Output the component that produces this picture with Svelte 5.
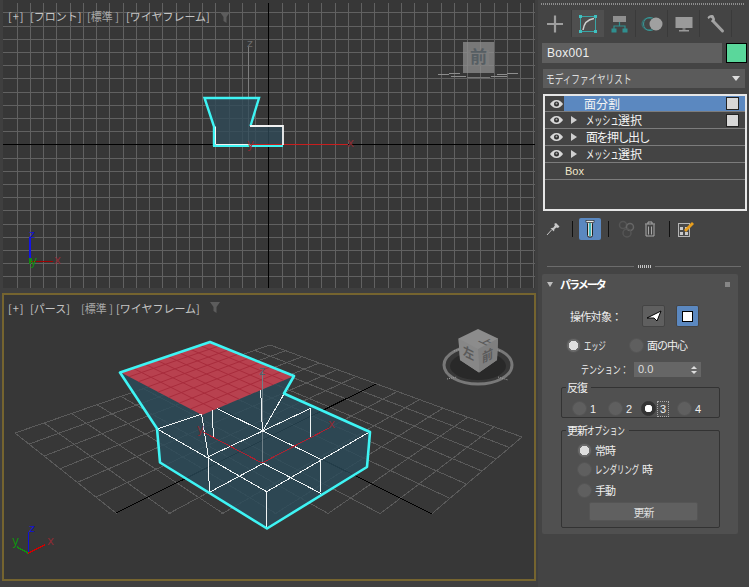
<script>
  const vx = [];
  for (let n = -19; n <= 20; n++) vx.push(Math.round(268.25 + n * 13.25));
  const hy = [];
  for (let n = -10; n <= 11; n++) hy.push(Math.round(144.3 + n * 13.2));

  function homog(p0, p1, p2, p3) {
    const dx1 = p1[0] - p2[0], dx2 = p3[0] - p2[0], sx = p0[0] - p1[0] + p2[0] - p3[0];
    const dy1 = p1[1] - p2[1], dy2 = p3[1] - p2[1], sy = p0[1] - p1[1] + p2[1] - p3[1];
    const den = dx1 * dy2 - dx2 * dy1;
    const g = (sx * dy2 - dx2 * sy) / den, h = (dx1 * sy - sx * dy1) / den;
    const a = p1[0] - p0[0] + g * p1[0], b = p3[0] - p0[0] + h * p3[0], c = p0[0];
    const d = p1[1] - p0[1] + g * p1[1], e = p3[1] - p0[1] + h * p3[1], f = p0[1];
    return (u, v) => {
      const w = g * u + h * v + 1;
      return [(a * u + b * v + c) / w, (d * u + e * v + f) / w];
    };
  }
  const ground = homog([15, 140], [270, 52], [522, 144], [280, 350]);
  const DIV = 12;
  const gridLines = [];
  for (let i = 0; i <= DIV; i++) {
    const t = i / DIV;
    if (i !== DIV / 2) {
      gridLines.push([ground(t, 0), ground(t, 1)]);
      gridLines.push([ground(0, t), ground(1, t)]);
    }
  }
  const blackLines = [
    [ground(0.5, 0), ground(0.5, 1)],
    [ground(0, 0.5), ground(1, 0.5)]
  ];
  const topFace = homog([120, 79], [210, 49], [294, 83], [202, 122]);
  const faceLines = [];
  for (let i = 1; i < 8; i++) {
    const t = i / 8;
    faceLines.push([topFace(t, 0), topFace(t, 1)]);
    faceLines.push([topFace(0, t), topFace(1, t)]);
  }
  const zp = (x, y) => [100 + x / 3, 37 + y / 3];
  const wires = [
    [[172, 297], [305, 252]], [[305, 255], [325, 380]], [[325, 380], [328, 487]],
    [[172, 297], [500, 485]], [[500, 485], [500, 595]], [[500, 485], [810, 305]],
    [[337, 240], [340, 320]], [[350, 235], [662, 388]], [[662, 388], [660, 490]],
    [[325, 380], [632, 235]], [[632, 235], [630, 325]], [[482, 180], [487, 300]],
    [[553, 190], [490, 300]], [[328, 487], [490, 400]], [[490, 400], [662, 490]]
  ].map(([a, b]) => [zp(...a), zp(...b)]);
  const pts = (a) => a.map((p) => p.join(',')).join(' ');
  const silhouette = pts([[120, 79.5], [210, 49], [294, 83], [284, 100.5], [370, 139], [367, 174], [267, 235.5], [160, 169.5], [157, 135.5]]);
</script>

<div class="app">
  <div class="views">
    <div class="vp-top">
      <svg class="scene" width="532" height="288" viewBox="3 0 532 288">
        <g class="crisp">
          {#each vx as x}<line x1={x + 0.5} y1="3" x2={x + 0.5} y2="288" stroke="#616161" />{/each}
          {#each hy as y}<line x1="3" y1={y + 0.5} x2="535" y2={y + 0.5} stroke="#616161" />{/each}
          <line x1="3" y1="144.5" x2="535" y2="144.5" stroke="#000" />
          <line x1="268.5" y1="3" x2="268.5" y2="288" stroke="#000" />
          <line x1="248.5" y1="46" x2="248.5" y2="144" stroke="#7d7d7d" />
        </g>
        <polygon points="204,97.5 259,97.5 250,125.5 282.5,125.5 282.5,145.5 213.5,145.5 213.5,125.5" fill="#2f4a59" fill-opacity="0.78" />
        <g class="crisp">
          <line x1="248" y1="144.5" x2="348" y2="144.5" stroke="#c81e1e" />
          <line x1="208" y1="98.5" x2="256" y2="98.5" stroke="#8d2b33" />
        </g>
        <polyline points="214,146 214,126.5 204.5,98 259,98 250.5,126" fill="none" stroke="#3ef4f4" stroke-width="2.4" />
        <polyline points="213,146 283,146" fill="none" stroke="#3ef4f4" stroke-width="2" />
        <polyline points="250,126 283,126 283,145" fill="none" stroke="#f2f2f2" stroke-width="1.8" />
        <polyline points="215.5,126.5 215.5,144.5 250,144.5" fill="none" stroke="#f2f2f2" stroke-width="1" />
        <text x="247" y="47" class="ax grey">z</text>
        <text x="247" y="148" class="ax dred">y</text>
        <text x="347" y="147" class="ax dred">x</text>
        <text x="8" y="21" class="lab wide">[+]</text>
        <text x="30" y="21" class="lab">[フロント]</text>
        <text x="87" y="21" class="lab dim">[標準 ]</text>
        <text x="126" y="21" class="lab">[ワイヤフレーム]</text>
        <path d="M220 12h10l-3.5 5v6l-3 -2v-4z" fill="#5c5c5c" />
        <rect x="463" y="42" width="31" height="31" fill="#8f8f8f" fill-opacity="0.75" />
        <rect x="468" y="50" width="21" height="16" fill="#7e7e7e" fill-opacity="0.7" />
        <text x="478.5" y="63" class="cube-t">前</text>
        <g class="crisp">
          <line x1="438" y1="74.5" x2="460" y2="73.5" stroke="#8d8d8d" />
          <line x1="451" y1="76.5" x2="466" y2="76.5" stroke="#8d8d8d" />
          <line x1="497" y1="74.5" x2="518" y2="73.5" stroke="#8d8d8d" />
          <line x1="491" y1="76.5" x2="507" y2="76.5" stroke="#8d8d8d" />
          <line x1="467" y1="77.5" x2="490" y2="77.5" stroke="#777" />
        </g>
        <g class="crisp">
          <line x1="29.5" y1="237" x2="29.5" y2="262" stroke="#1414e6" stroke-width="2" />
          <line x1="30" y1="261.5" x2="53" y2="261.5" stroke="#a00000" />
          <line x1="30" y1="258" x2="30" y2="264" stroke="#109010" stroke-width="2" />
        </g>
        <text x="29" y="238" class="ax blue">z</text>
        <text x="54" y="264" class="ax dred">x</text>
        <text x="30" y="265" class="ax green">y</text>
      </svg>
    </div>

    <div class="vp-bottom">
      <svg class="scene" width="530" height="284" viewBox="4 295 530 284">
        <defs>
          <clipPath id="near"><rect x="0" y="0" width="540" height="221" /></clipPath>
        </defs>
        <g transform="translate(0 293)">
          <g clip-path="url(#near)" class="crisp">
            {#each gridLines as l}
              <line x1={l[0][0]} y1={l[0][1]} x2={l[1][0]} y2={l[1][1]} stroke="#5a5a5a" />
            {/each}
            {#each blackLines as l}
              <line x1={l[0][0]} y1={l[0][1]} x2={l[1][0]} y2={l[1][1]} stroke="#000" />
            {/each}
          </g>
          <polygon points={silhouette} fill="#2b4a59" fill-opacity="0.82" />
          <polygon points={pts([[120, 79], [210, 49], [294, 83], [202, 122]])} fill="#b8414f" />
          {#each faceLines as l}
            <line x1={l[0][0]} y1={l[0][1]} x2={l[1][0]} y2={l[1][1]} stroke="#a82c3c" stroke-width="1" />
          {/each}
          <g class="crisp">
            <line x1="262" y1="78" x2="262" y2="170" stroke="#6f8088" />
            {#each wires as l}
              <line x1={l[0][0]} y1={l[0][1]} x2={l[1][0]} y2={l[1][1]} stroke="#eef3f4" />
            {/each}
            <line x1="262" y1="170" x2="203" y2="139" stroke="#b02030" />
            <line x1="262" y1="170" x2="329" y2="135" stroke="#b02030" />
          </g>
          <polygon points={silhouette} fill="none" stroke="#3ef4f4" stroke-width="2.6" stroke-linejoin="round" />
          <text x="259" y="82" class="ax slate">z</text>
          <text x="197" y="140" class="ax dred">y</text>
          <text x="328" y="135" class="ax dred">x</text>

          <text x="8" y="20" class="lab wide">[+]</text>
          <text x="30" y="20" class="lab">[パース]</text>
          <text x="81" y="20" class="lab dim">[標準 ]</text>
          <text x="116" y="20" class="lab">[ワイヤフレーム]</text>
          <path d="M210 9h10l-3.5 5v6l-3 -2v-4z" fill="#5c5c5c" />

          <ellipse cx="478" cy="72" rx="34" ry="19" fill="none" stroke="#787878" stroke-width="3" />
          <ellipse cx="478" cy="73" rx="28" ry="14" fill="#292929" />
          <g fill="none" stroke="#a0a0a0" stroke-width="1" stroke-dasharray="1 1">
            <path d="M454 58l8 -3M500 58l-7 -3M447 86l10 -2M498 84l10 3" />
          </g>
          <polygon points="458.5,45.5 478,36 498,45.5 497,67 479,79.500 460,67" fill="#8c8c8c" />
          <polygon points="478,56 498,45.5 497,67 479,79.500" fill="#7f7f7f" />
          <polygon points="458.5,45.5 478,56 479,79.500 460,67" fill="#878787" />
          <text transform="matrix(.85 .42 0 1 463 62)" class="cube-f">左</text>
          <text transform="matrix(.85 -.42 0 1 482 70)" class="cube-f">前</text>
          <text transform="matrix(.7 .35 -.7 .35 478 48)" class="cube-f">上</text>

          <g class="crisp">
            <line x1="28.5" y1="239" x2="28.5" y2="260" stroke="#1010d8" stroke-width="1.4" />
            <line x1="28" y1="260" x2="45" y2="252" stroke="#d00000" stroke-width="1.4" />
            <line x1="28" y1="260" x2="17" y2="254" stroke="#109010" stroke-width="1.4" />
          </g>
          <text x="29" y="239" class="ax blue">z</text>
          <text x="47" y="252" class="ax dred">x</text>
          <text x="12" y="252" class="ax green">y</text>
        </g>
      </svg>
    </div>
  </div>

  <aside class="panel">
    <div class="dots-top"></div>
    <div class="tabs">
      <div class="tab">
        <svg width="20" height="20" viewBox="0 0 20 20"><path d="M9 1.500v17M1 10h16" stroke="#9e9e9e" stroke-width="2.2" /></svg>
      </div>
      <div class="tab on">
        <svg width="20" height="20" viewBox="0 0 20 20">
          <rect x="2.500" y="2.500" width="15" height="15" fill="none" stroke="#3aa5a5" stroke-width="1" />
          <path d="M5 16C6 9 9 5.500 16 4.500" fill="none" stroke="#cfcfcf" stroke-width="1.500" />
          <path d="M1 1h3v3h-3zM16 1h3v3h-3zM1 16h3v3h-3zM16 16h3v3h-3z" fill="#3fc1c1" />
        </svg>
      </div>
      <div class="tab">
        <svg width="20" height="20" viewBox="0 0 20 20">
          <rect x="3" y="2" width="13" height="6" fill="#8f8f8f" />
          <path d="M9.500 8v4M4 15v-3h11v3" fill="none" stroke="#2f8f8f" stroke-width="1.200" />
          <rect x="1.500" y="14.500" width="5" height="4" fill="#2f8f8f" />
          <rect x="12.500" y="14.500" width="5" height="4" fill="#2f8f8f" />
        </svg>
      </div>
      <div class="tab">
        <svg width="24" height="20" viewBox="0 0 24 20">
          <circle cx="8" cy="10" r="6" fill="none" stroke="#2f7d7d" />
          <circle cx="10" cy="10" r="6.500" fill="none" stroke="#3a9a9a" />
          <circle cx="16" cy="10" r="6.500" fill="#a0a0a0" />
        </svg>
      </div>
      <div class="tab">
        <svg width="20" height="20" viewBox="0 0 20 20">
          <rect x="1.500" y="3" width="17" height="11" fill="#9a9a9a" />
          <rect x="8.500" y="14" width="3" height="2" fill="#7a7a7a" />
          <rect x="5" y="16" width="10" height="1.500" fill="#9a9a9a" />
        </svg>
      </div>
      <div class="tab">
        <svg width="20" height="20" viewBox="0 0 20 20">
          <path d="M7 7L16.500 17" stroke="#a0a0a0" stroke-width="3" stroke-linecap="round" />
          <path d="M7.500 1.500C5 .5 2.500 1.500 1.500 3.500l1 1.500 2-1.500 2 1.500-1.500 2.500C7.500 8.500 9 7 9 5z" fill="#a8a8a8" />
        </svg>
      </div>
    </div>

    <div class="name-row">
      <div class="name">Box001</div>
      <div class="swatch"></div>
    </div>

    <div class="drop">
      <span class="n w-mod">モディファイヤリスト</span>
      <span class="caret"></span>
    </div>

    <div class="stack">
      <div class="row sel first">
        <span class="eye">{@render eye()}</span>
        <span class="blue">
          <span class="rowtxt">面分割</span>
          <span class="box"></span>
        </span>
      </div>
      <div class="row">
        <span class="eye">{@render eye()}</span>
        <span class="tri"></span>
        <span class="rowtxt"><span class="n w-mesh">メッシュ</span>選択</span>
        <span class="box"></span>
      </div>
      <div class="row">
        <span class="eye">{@render eye()}</span>
        <span class="tri"></span>
        <span class="rowtxt tight">面を押し出し</span>
      </div>
      <div class="row">
        <span class="eye">{@render eye()}</span>
        <span class="tri"></span>
        <span class="rowtxt"><span class="n w-mesh">メッシュ</span>選択</span>
      </div>
      <div class="row">
        <span class="basetxt">Box</span>
      </div>
    </div>

    <div class="tools">
      <svg class="t-pin" width="16" height="16" viewBox="0 0 16 16">
        <path d="M2 14L6.500 9" stroke="#c4c4c4" stroke-width="1" />
        <path d="M5.500 7.500L8.500 6.500 10 4 9 3 11 2 14.500 5.500 13 7 11.500 6.500 9.500 8 9 10.500z" fill="#c9c9c9" />
      </svg>
      <i class="sep s1"></i>
      <div class="tbtn">
        <svg width="10" height="18" viewBox="0 0 10 18">
          <rect x="2.500" y="2" width="5" height="15" rx="1.500" fill="#d8d8d8" stroke="#222" />
          <rect x="4" y="3" width="2" height="13" fill="#3fb7b7" />
          <rect x="1" y="0.500" width="8" height="2" fill="#e8e8e8" stroke="#222" stroke-width=".6" />
        </svg>
      </div>
      <i class="sep s2"></i>
      <svg class="t-ch" width="18" height="18" viewBox="0 0 18 18">
        <circle cx="5" cy="5" r="3.500" fill="none" stroke="#555" stroke-width="1.500" />
        <circle cx="12" cy="7" r="3.500" fill="none" stroke="#666" stroke-width="1.500" />
        <circle cx="9" cy="13" r="4" fill="none" stroke="#555" stroke-width="1.500" />
      </svg>
      <svg class="t-tr" width="12" height="16" viewBox="0 0 12 16">
        <path d="M1 3h10M4 3V1h4v2M2 3.500v11.500h8V3.500M4.500 5.500v8M7.500 5.500v8" fill="none" stroke="#a8a8a8" />
      </svg>
      <i class="sep s3"></i>
      <svg class="t-cf" width="18" height="18" viewBox="0 0 18 18">
        <rect x="1.500" y="3.500" width="11" height="13" fill="#4a4a4a" stroke="#b5b5b5" />
        <path d="M3 7h3v3H3zM8 7h3v3H8zM3 12h3v3H3zM8 12h3v3H8z" fill="#c9c9c9" />
        <path d="M7 10L15 2l2 2-8 8z" fill="#e89e1d" />
      </svg>
    </div>

    <div class="divider"><span></span><b></b><span></span></div>

    <section class="roll">
      <header class="roll-h">
        <span class="arrow"></span>
        <span class="title">パラメータ</span>
        <span class="grip"></span>
      </header>

      <div class="target">
        <span class="target-l">操作対象：</span>
        <button class="sq" aria-label="三角形">
          <svg width="16" height="14" viewBox="0 0 16 14"><path d="M1 9L15 2 11 12 8 9z" fill="#fff" stroke="#000" /></svg>
        </button>
        <button class="sq act" aria-label="四角形">
          <span class="whitebox"></span>
        </button>
      </div>

      <div class="mode">
        <label class="radio"><i class="dot chk"></i><span class="n w-edge">エッジ</span></label>
        <label class="radio"><i class="dot"></i><span class="kj">面の中心</span></label>
      </div>

      <div class="tension">
        <span class="n w-ten">テンション：</span>
        <div class="spin"><span>0.0</span><em></em></div>
      </div>

      <fieldset class="g g1">
        <legend><span class="kj">反復</span></legend>
        <div class="iter">
          <label class="radio"><i class="dot"></i><span class="num">1</span></label>
          <label class="radio nar"><i class="dot"></i><span class="num">2</span></label>
          <label class="radio"><i class="dot blk"></i><span class="num focus">3</span></label>
          <label class="radio"><i class="dot"></i><span class="num">4</span></label>
        </div>
      </fieldset>

      <fieldset class="g g2">
        <legend><span class="kj">更新</span><span class="n w-opt">オプション</span></legend>
        <label class="radio r1"><i class="dot chk"></i><span class="kj">常時</span></label>
        <label class="radio r2"><i class="dot"></i><span class="n w-ren">レンダリング</span><span class="kj">時</span></label>
        <label class="radio r3"><i class="dot"></i><span class="kj">手動</span></label>
        <button class="update">更新</button>
      </fieldset>
    </section>
  </aside>
</div>

{#snippet eye()}
  <svg width="15" height="10" viewBox="0 0 14 10">
    <path d="M0.500 5C3 1.500 5 1 7 1s4 .5 6.500 4C11 8.500 9 9 7 9S3 8.500 .5 5z" fill="#d8d8d8" />
    <circle cx="7" cy="5" r="2.500" fill="#333" />
    <circle cx="7" cy="4.500" r="1" fill="#aaa" />
  </svg>
{/snippet}

<style>
  :global(body) { margin: 0; background: #444; }
  .app {
    display: grid;
    grid-template-columns: 538px 211px;
    width: 749px;
    height: 587px;
    overflow: hidden;
    font-family: "Noto Sans CJK JP", "Liberation Sans", sans-serif;
    color: #eee;
  }
  .views { background: #3f3f3f; padding: 0 0 0 3px; display: flex; flex-direction: column; }
  .vp-top { height: 288px; width: 532px; background: #373737; }
  .vp-bottom {
    margin: 5px 0 0 -1px;
    width: 530px;
    height: 284px;
    border: 2px solid #75642f;
    background: #373737;
    box-sizing: content-box;
  }
  .scene { display: block; }
  .crisp { shape-rendering: crispEdges; }
  .lab { font-size: 11px; fill: #c4c4c4; }
  .lab.wide { letter-spacing: 1px; }
  .lab.dim { fill: #a8a8a8; }
  .ax { font-family: "DejaVu Sans", sans-serif; font-size: 11px; }
  .grey { fill: #6c6c6c; }
  .slate { fill: #53616a; font-size: 12px; }
  .dred { fill: #8a2c34; font-size: 12px; }
  .blue { fill: #1010d8; }
  .green { fill: #109010; font-size: 12px; }
  .cube-t { font-size: 17px; fill: #565e63; text-anchor: middle; font-weight: 700; }
  .cube-f { font-size: 13px; fill: #5a5a5a; font-weight: 700; }

  .panel { background: #444; position: relative; min-width: 0; }
  .n { display: inline-block; white-space: nowrap; transform-origin: left center; }
  .dots-top {
    height: 2px;
    margin: 3px 4px 0 3px;
    background: repeating-linear-gradient(90deg, #8d8d8d 0 1px, transparent 1px 2px);
  }
  .tabs {
    display: flex;
    margin: 5px 0 0 2px;
    height: 27px;
  }
  .tab {
    width: 32px;
    display: flex;
    align-items: center;
    justify-content: center;
    border-right: 1px solid #3a3a3a;
    box-sizing: border-box;
  }
  .tab.on { background: #4f4f4f; border-right: 0; }
  .name-row { display: flex; margin: 6px 2px 0 4px; gap: 4px; height: 20px; }
  .name {
    flex: 1;
    background: #5f5f5f;
    font: 12px/20px "Liberation Sans", sans-serif;
    padding-left: 5px;
    letter-spacing: 0.3px;
    color: #eee;
  }
  .swatch { width: 19px; border: 1px solid #000; background: #5ad79b; }
  .drop {
    margin: 6px 4px 0 5px;
    height: 19px;
    background: #5b5b5b;
    font-size: 12px;
    line-height: 19px;
    padding-left: 3px;
    display: flex;
    justify-content: space-between;
    align-items: center;
    color: #ddd;
  }
  .w-mod { width: 86px; transform: scaleX(.72); }
  .caret {
    width: 0; height: 0;
    border: 4px solid transparent;
    border-top: 5px solid #ddd;
    border-bottom: 0;
    margin-right: 5px;
  }
  .stack {
    margin: 6px 2px 0 5px;
    height: 113px;
    border: 2px solid #e6e6e6;
    background: #444;
    box-sizing: content-box;
    width: 200px;
  }
  .row {
    height: 17px;
    display: flex;
    align-items: center;
    box-sizing: border-box;
    border-bottom: 1px solid #7c7c7c;
    font-size: 12px;
    line-height: 16px;
    position: relative;
    color: #f4f4f4;
  }
  .row.first { height: 16px; border-bottom-color: #7c7c7c; }
  .eye { width: 19px; padding-left: 4px; display: flex; box-sizing: border-box; flex: none; }
  .tri {
    width: 0; height: 0;
    border-left: 6px solid #cfcfcf;
    border-top: 4.500px solid transparent;
    border-bottom: 4.500px solid transparent;
    margin: 0 9px 0 7px;
    flex: none;
  }
  .blue {
    flex: 1;
    align-self: stretch;
    background: #5b88c0;
    display: flex;
    align-items: center;
    padding-left: 20px;
    justify-content: space-between;
  }
  .rowtxt { flex: none; }
  .tight { letter-spacing: -1.500px; }
  .w-mesh { width: 32px; transform: scaleX(.68); }
  .box {
    width: 11px; height: 11px;
    background: #d8d8d8;
    border: 1px solid #222;
    margin-left: auto;
    margin-right: 6px;
    flex: none;
  }
  .blue .box { margin-right: 6px; }
  .basetxt { font: 11px "Liberation Sans", sans-serif; margin-left: 20px; color: #f0e6c8; }
  .tools {
    position: relative;
    height: 22px;
    margin-top: 7px;
    display: flex;
    align-items: center;
  }
  .t-pin { margin-left: 7px; }
  .sep { width: 1px; height: 16px; background: #111; flex: none; }
  .s1 { margin-left: 11px; }
  .s2 { margin-left: 7px; }
  .s3 { margin-left: 13px; }
  .tbtn {
    width: 22px; height: 22px;
    margin-left: 6px;
    background: #5b88c0;
    border-radius: 2px;
    display: flex;
    align-items: center;
    justify-content: center;
  }
  .t-ch { margin-left: 9px; }
  .t-tr { margin-left: 8px; }
  .t-cf { margin-left: 7px; }
  .divider {
    display: flex;
    align-items: center;
    gap: 4px;
    margin: 24px 8px 0 9px;
    height: 4px;
  }
  .divider span { flex: 1; height: 1px; background: #6c6c6c; }
  .divider b {
    width: 13px; height: 3px;
    background: repeating-linear-gradient(90deg, #c5c5c5 0 1px, transparent 1px 2px);
  }
  .roll {
    margin: 6px 11px 0 4px;
    height: 260px;
    background: #505050;
    border-radius: 2px;
    box-sizing: border-box;
    font-size: 11px;
    color: #efefef;
  }
  .kj { letter-spacing: -1px; }
  .roll-h { display: flex; align-items: center; height: 20px; padding: 0 8px 0 5px; }
  .arrow {
    width: 0; height: 0;
    border: 3.500px solid transparent;
    border-top: 5px solid #bdbdbd;
    border-bottom: 0;
  }
  .title { margin-left: 7px; font-size: 11px; font-weight: 700; letter-spacing: -2px; color: #fff; }
  .grip {
    margin-left: auto;
    width: 5px; height: 5px;
    background-image: radial-gradient(#8a8a8a 0.7px, transparent 0.8px);
    background-size: 2px 2px;
  }
  .target { display: flex; align-items: center; margin: 11px 0 0 28px; height: 22px; }
  .target-l { width: 72px; letter-spacing: -0.700px; font-size: 11px; }
  .sq {
    width: 23px; height: 22px;
    padding: 0;
    border: 1px solid #444;
    border-radius: 2px;
    background: #5f5f5f;
    display: flex;
    align-items: center;
    justify-content: center;
  }
  .sq.act { margin-left: 11px; background: #5b88c0; }
  .whitebox { width: 9px; height: 9px; background: #fff; border: 1px solid #000; }
  .radio { display: flex; align-items: center; gap: 3px; }
  .dot {
    width: 15px; height: 15px;
    border-radius: 50%;
    background: #5f5f5f;
    flex: none;
    box-sizing: border-box;
    border: 1px solid #555;
  }
  .dot.chk {
    background: radial-gradient(circle, #dedede 0 4.500px, #6a6a6a 5px);
  }
  .dot.blk {
    background: radial-gradient(circle, #fff 0 3.500px, #333 4px);
    border-color: #333;
  }
  .mode { display: flex; margin: 11px 0 0 24px; height: 14px; gap: 24px; }
  .w-edge { width: 21px; transform: scaleX(.66); }
  .tension { display: flex; align-items: center; margin: 10px 0 0 39px; height: 14px; }
  .w-ten { width: 53px; transform: scaleX(.72); }
  .spin {
    width: 67px; height: 15px;
    background: #666;
    display: flex;
    align-items: center;
    justify-content: space-between;
    padding: 0 4px;
    box-sizing: border-box;
    font: 11px "Liberation Sans", sans-serif;
    color: #ddd;
  }
  .spin em {
    width: 0; height: 0;
    border-left: 3px solid transparent;
    border-right: 3px solid transparent;
    border-top: 3px solid #ddd;
    position: relative;
    top: 3px;
  }
  .spin em::before {
    content: "";
    position: absolute;
    left: -3px;
    top: -8px;
    border-left: 3px solid transparent;
    border-right: 3px solid transparent;
    border-bottom: 3px solid #ddd;
  }
  .g {
    margin: 0 0 0 19px;
    padding: 0;
    width: 159px;
    box-sizing: border-box;
    border: 1px solid #333;
    border-radius: 2px;
    min-width: 0;
    position: relative;
  }
  .g legend {
    margin-left: 4px;
    padding: 0 4px 0 1px;
    font-size: 11px;
    line-height: 11px;
  }
  .g1 { margin-top: 6px; height: 36px; }
  .iter { display: flex; margin: 8px 0 0 10px; }
  .iter .radio { width: 36px; }
  .iter .radio.nar { width: 33px; }
  .num { font: 11px "Liberation Sans", sans-serif; color: #eee; }
  .focus { outline: 1px dotted #aaa; outline-offset: 1px; padding: 0 1px; }
  .g2 { margin-top: 7px; height: 103px; }
  .w-opt { width: 38px; transform: scaleX(.69); }
  .w-ren { width: 44px; transform: scaleX(.67); }
  .r1 { margin: 6px 0 0 15px; }
  .r2 { margin: 3px 0 0 15px; }
  .r3 { margin: 5px 0 0 15px; }
  .update {
    display: block;
    margin: 4px 0 0 27px;
    width: 109px;
    height: 19px;
    padding: 0;
    font: 11px "Noto Sans CJK JP", sans-serif;
    letter-spacing: -1px;
    background: #606060;
    color: #ddd;
    border: 1px solid #555;
    border-radius: 2px;
  }
</style>
